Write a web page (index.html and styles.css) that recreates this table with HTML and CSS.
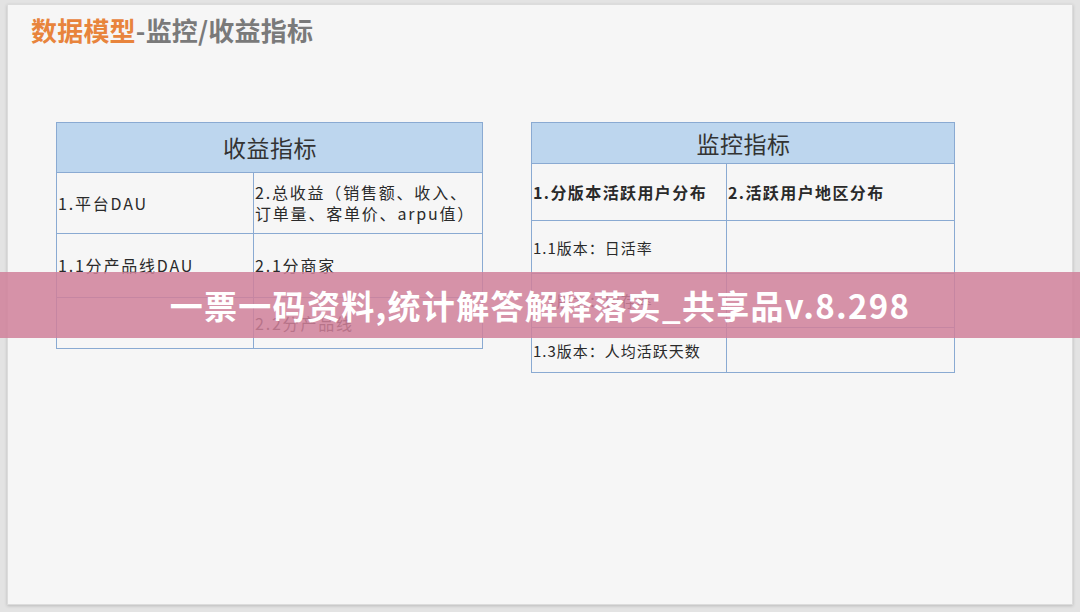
FILE: index.html
```html
<!DOCTYPE html>
<html lang="zh-CN">
<head>
<meta charset="utf-8">
<title>数据模型-监控/收益指标</title>
<link rel="stylesheet" href="styles.css">
</head>
<body>
<div class="slide">
  <h1 class="title"><span class="accent">数据模型</span>-监控/收益指标</h1>
  <div class="tables">
    <table class="grid grid-left">
      <colgroup><col class="c1"><col class="c2"></colgroup>
      <tr class="head"><th colspan="2">收益指标</th></tr>
      <tr class="r1"><td>1.平台DAU</td><td>2.总收益（销售额、收入、<br>订单量、客单价、arpu值）</td></tr>
      <tr class="r2"><td>1.1分产品线DAU</td><td>2.1分商家</td></tr>
      <tr class="r3"><td></td><td>2.2分产品线</td></tr>
    </table>
    <table class="grid grid-right">
      <colgroup><col class="c1"><col class="c2"></colgroup>
      <tr class="head"><th colspan="2">监控指标</th></tr>
      <tr class="r1 strong"><td>1.分版本活跃用户分布</td><td>2.活跃用户地区分布</td></tr>
      <tr class="r2"><td>1.1版本：日活率</td><td></td></tr>
      <tr class="r3"><td>1.2版本：留存率</td><td></td></tr>
      <tr class="r4"><td>1.3版本：人均活跃天数</td><td></td></tr>
    </table>
  </div>
</div>
<div class="banner">一票一码资料,统计解答解释落实_共享品v.8.298</div>
</body>
</html>
```

FILE: styles.css
```css
html, body {
  margin: 0;
  padding: 0;
}
body {
  width: 1080px;
  height: 612px;
  background: #e3e3e3;
  font-family: "Noto Sans CJK SC", "Noto Sans", sans-serif;
  box-sizing: border-box;
  padding: 4px 7px 7px 7px;
  position: relative;
  overflow: hidden;
}
.slide {
  height: 601px;
  background: #f6f6f6;
  box-shadow: 0 1px 3px rgba(0,0,0,0.18);
  border: 1px solid #dcdcdc;
  box-sizing: border-box;
  display: flex;
  flex-direction: column;
}
.title {
  margin: 10px 0 0 23px;
  font-size: 26px;
  line-height: 30px;
  font-weight: 700;
  color: #7a7a7a;
  letter-spacing: 0.2px;
}
.title .accent {
  color: #e8843c;
}
.tables {
  display: flex;
  align-items: flex-start;
  margin: 77px 0 0 48px;
  gap: 48px;
}
.grid {
  border-collapse: collapse;
  table-layout: fixed;
  border: 1.5px solid #7f9dc0;
  color: #2a2a2a;
}
.grid th, .grid td {
  border: 1px solid #8aaad2;
  padding: 0 0 0 1px;
  font-size: 16px;
  line-height: 21px;
  text-align: left;
  vertical-align: middle;
  letter-spacing: 1.8px;
  font-weight: 400;
}
.grid th {
  background: #bdd6ee;
  text-align: center;
  font-size: 23px;
  color: #333;
  letter-spacing: 0.5px;
}
.grid-left .c1 { width: 197px; }
.grid-left .c2 { width: 229px; }
.grid-left .head { height: 50px; }
.grid-left .r1 { height: 61px; }
.grid-left .r2 { height: 64px; }
.grid-left .r3 { height: 51px; }

.grid-right .c1 { width: 195px; }
.grid-right .c2 { width: 228px; }
.grid-right .head { height: 41px; }
.grid-right .r1 { height: 57px; }
.grid-right .r2 { height: 53px; }
.grid-right .r3 { height: 54px; }
.grid-right .r4 { height: 45px; }
.grid-right td { font-size: 15px; letter-spacing: 1px; }
.grid-right .strong td { font-size: 16px; font-weight: 700; letter-spacing: 1.4px; }

.banner {
  position: absolute;
  left: 0;
  top: 272px;
  width: 1080px;
  height: 66px;
  background: rgba(208, 128, 154, 0.85);
  color: #fff;
  font-weight: 700;
  font-size: 33px;
  line-height: 66px;
  text-align: center;
  letter-spacing: 1.3px;
}
```
